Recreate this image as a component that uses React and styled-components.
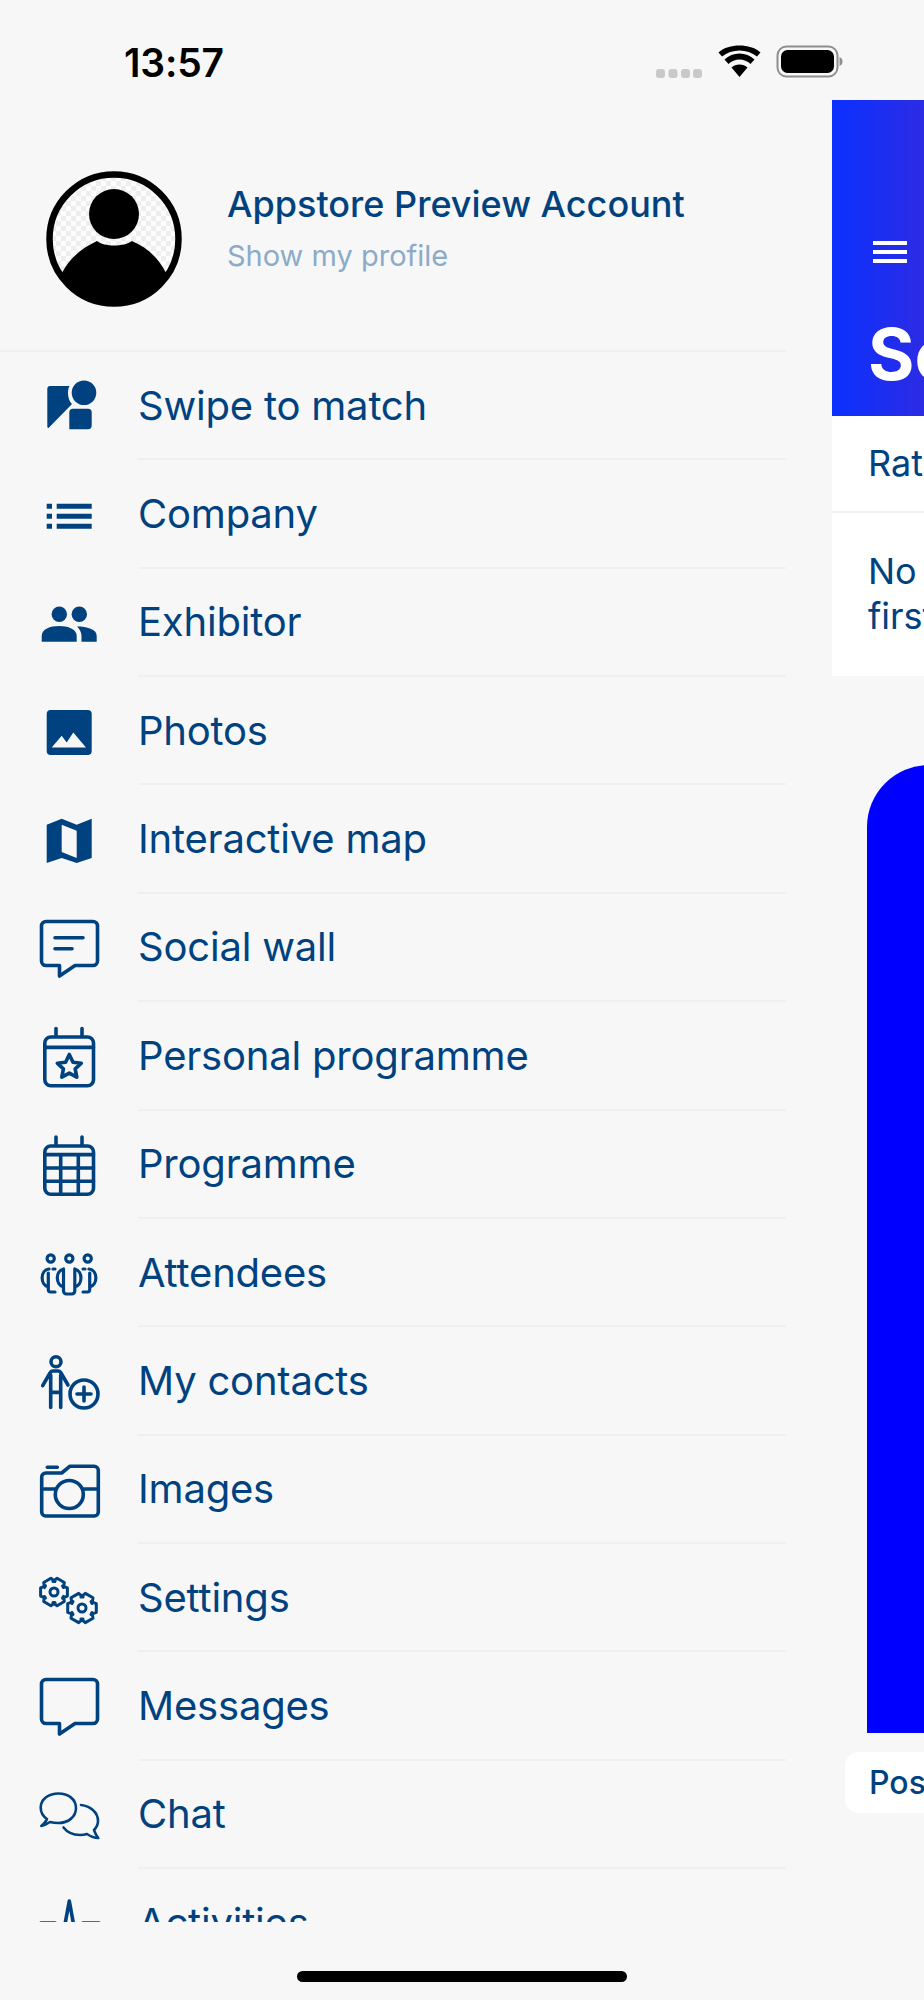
import React from "react"
import styled, { createGlobalStyle } from "styled-components"

const NAVY = "#00427f"

const GlobalStyle = createGlobalStyle`
  html, body {
    margin: 0;
    background: #f7f7f7;
  }
  body {
    font-family: Inter, "Noto Sans", sans-serif;
    -webkit-font-smoothing: antialiased;
  }
`

const Page = styled.div`
  width: 924px;
  height: 2000px;
  overflow: hidden;
  display: flex;
  flex-direction: column;
  background: #f7f7f7;
`

const StatusBar = styled.div`
  height: 100px;
  flex: none;
  display: flex;
  justify-content: space-between;
  padding: 0 81px 0 124px;
  box-sizing: border-box;
`

const Time = styled.div`
  font-size: 39px;
  font-weight: 600;
  line-height: 44px;
  margin-top: 41px;
  color: #000;
  letter-spacing: -0.2px;
`

const StatusIcons = styled.svg`
  width: 188px;
  height: 40px;
  margin-top: 42px;
`

const Main = styled.div`
  height: 1822px;
  flex: none;
  display: flex;
`

const Drawer = styled.nav`
  flex: none;
  width: 786px;
  margin-right: 46px;
  display: flex;
  flex-direction: column;
`

const Profile = styled.div`
  height: 252px;
  flex: none;
  box-sizing: border-box;
  border-bottom: 2px solid #f0f0f0;
  padding: 71px 0 0 46px;
  display: flex;
  align-items: flex-start;
  gap: 45px;
`

const Avatar = styled.svg`
  width: 136px;
  height: 136px;
  flex: none;
`

const ProfileText = styled.div`
  display: flex;
  flex-direction: column;
  padding-top: 11px;
`

const Name = styled.div`
  font-size: 36px;
  font-weight: 500;
  line-height: 44px;
  color: ${NAVY};
`

const ShowProfile = styled.div`
  font-size: 29px;
  line-height: 36px;
  margin-top: 12px;
  color: #8cabc9;
`

const Menu = styled.div`
  flex: 1;
  min-height: 0;
  overflow: hidden;
`

const Row = styled.div`
  height: 108.36px;
  display: flex;
  align-items: stretch;
`

const IconCell = styled.div`
  width: 138px;
  flex: none;
  display: flex;
  align-items: center;
  padding-left: 40px;
  box-sizing: border-box;
`

const Label = styled.div`
  flex: 1;
  display: flex;
  align-items: center;
  box-sizing: border-box;
  border-bottom: 2px solid #f0f0f0;
  font-size: 40px;
  letter-spacing: -0.2px;
  color: ${NAVY};
`

const Glyph = styled.svg`
  width: 60px;
  height: 60px;
  overflow: visible;
  fill: ${props => (props.$line ? "none" : NAVY)};
  stroke: ${props => (props.$line ? NAVY : "none")};
  stroke-width: ${props => props.$weight || 3.6}px;
  stroke-linecap: round;
  stroke-linejoin: round;
`

const Panel = styled.section`
  flex: none;
  width: 780px;
  display: flex;
  flex-direction: column;
`

const PanelHeader = styled.header`
  height: 316px;
  flex: none;
  box-sizing: border-box;
  padding: 141px 0 0 36px;
  background: linear-gradient(90deg, #0a30ff 0, #2c2ce4 92px, #3a2ad0 100%);
  color: #fff;
`

const Burger = styled.div`
  width: 34px;
  height: 22px;
  margin-left: 5px;
  display: flex;
  flex-direction: column;
  justify-content: space-between;
  span {
    height: 4px;
    background: #fff;
  }
`

const Title = styled.div`
  font-size: 71px;
  font-weight: 700;
  line-height: 84px;
  margin-top: 49px;
`

const Card = styled.div`
  background: #fff;
  height: 260px;
  flex: none;
  color: ${NAVY};
  font-size: 36px;
  line-height: 45px;
`

const CardRow = styled.div`
  height: 97px;
  box-sizing: border-box;
  padding: 25px 0 0 36px;
  border-bottom: 2px solid #f0f0f0;
`

const CardText = styled.div`
  padding: 36px 0 0 36px;
`

const PostImage = styled.div`
  height: 968px;
  flex: none;
  margin: 89px 0 0 35px;
  background: #0000ff;
  border-top-left-radius: 62px;
`

const PostButton = styled.div`
  margin: 19px 0 0 13px;
  height: 61px;
  flex: none;
  box-sizing: border-box;
  padding-left: 24px;
  display: flex;
  align-items: center;
  background: #fff;
  border-radius: 14px;
  color: ${NAVY};
  font-size: 32px;
  font-weight: 500;
`

const Footer = styled.div`
  flex: 1;
  display: flex;
  justify-content: center;
  padding-top: 49px;
  box-sizing: border-box;
`

const HomeBar = styled.div`
  width: 330px;
  height: 11px;
  background: #000;
  border-radius: 6px;
`

// six toothed cog outline, built once for the settings icon
const gearPath = (cx, cy, outer, inner) => {
  const points = []
  for (let i = 0; i < 6; i++) {
    const a = (i * Math.PI) / 3
    const steps = [
      [a - 0.3, outer],
      [a + 0.3, outer],
      [a + 0.62, inner],
      [a + Math.PI / 3 - 0.62, inner],
    ]
    steps.forEach(([ang, r]) => {
      points.push(`${(cx + r * Math.cos(ang)).toFixed(1)} ${(cy + r * Math.sin(ang)).toFixed(1)}`)
    })
  }
  return `M${points.join(" L")}Z`
}

const BUBBLE =
  "M6 3.5H53a4.5 4.5 0 0 1 4.5 4.5V43a4.5 4.5 0 0 1-4.5 4.5H35L19.5 58V47.5H6A4.5 4.5 0 0 1 1.5 43V8A4.5 4.5 0 0 1 6 3.5Z"

const icons = {
  swipe: (
    <Glyph viewBox="0 0 60 60">
      <path d="M10 10H29.5C27 14 27.5 24 32 28L9 51.5Q7.3 53 7.3 50V13Q7.3 10 10 10Z" />
      <circle cx="44" cy="16.7" r="12.3" />
      <path d="M33 32.7H48a3.7 3.7 0 0 1 3.7 3.7V49.6a3.7 3.7 0 0 1-3.7 3.7H29.3V36.4a3.7 3.7 0 0 1 3.7-3.7Z" />
    </Glyph>
  ),
  list: (
    <Glyph viewBox="0 0 60 60">
      <path d="M6.7 18.8H12V23.8H6.7ZM16.7 18.8H51.7V23.8H16.7ZM6.7 28.8H12V33.8H6.7ZM16.7 28.8H51.7V33.8H16.7ZM6.7 38.8H12V43.8H6.7ZM16.7 38.8H51.7V43.8H16.7Z" />
    </Glyph>
  ),
  people: (
    <Glyph viewBox="0 0 60 60">
      <circle cx="19.3" cy="21.3" r="7.7" />
      <circle cx="39.3" cy="21.3" r="7.7" />
      <path d="M1.7 48.7V43C1.7 36 10 33 19 33C28 33 36.7 36 36.7 43V48.7Z" />
      <path d="M37 33.5C47 33.5 56.7 36 56.7 43V48.7H41.5V43C41.5 39 39.5 36 37 33.5Z" />
    </Glyph>
  ),
  photo: (
    <Glyph viewBox="0 0 60 60">
      <path
        fillRule="evenodd"
        d="M10.7 9H47.7a4 4 0 0 1 4 4V50a4 4 0 0 1-4 4H10.7a4 4 0 0 1-4-4V13a4 4 0 0 1 4-4ZM11.7 46.5H46L33.3 31.5L26.7 41.5L21.7 34.8Z"
      />
    </Glyph>
  ),
  map: (
    <Glyph viewBox="0 0 60 60">
      <path
        fillRule="evenodd"
        d="M6.7 14.7L21.7 8.7L36.7 14.7L51.7 8.7V48.1L36.7 53.1L21.7 48.1L6.7 53.1ZM21.7 14.7V42.1L36.7 48.1V20.7Z"
      />
    </Glyph>
  ),
  wall: (
    <Glyph viewBox="0 0 60 60" $line>
      <path d={BUBBLE} />
      <path d="M15 19.7H43M15 30.7H32" />
    </Glyph>
  ),
  personal: (
    <Glyph viewBox="0 0 60 60" $line>
      <rect x="4.8" y="11" width="48.7" height="48.7" rx="6" />
      <path d="M4.8 21.4H53.5M16 2.5V10M42 2.5V10" />
      <path d="M29.3 28.5L33 36.2L41.3 37.2L35.2 42.9L36.8 51.2L29.3 47.1L21.8 51.2L23.4 42.9L17.3 37.2L25.6 36.2Z" />
    </Glyph>
  ),
  programme: (
    <Glyph viewBox="0 0 60 60" $line>
      <rect x="4.8" y="11" width="48.7" height="48.2" rx="6" />
      <path d="M4.8 19.6H53.5M16 2V10M42 2V10M20.7 19.6V59M38.3 19.6V59M4.8 33H53.5M4.8 46.3H53.5" />
    </Glyph>
  ),
  attendees: (
    <Glyph viewBox="0 0 60 60" $line $weight={3.2}>
      <circle cx="10.7" cy="15.5" r="3.6" />
      <circle cx="29.3" cy="15.5" r="3.6" />
      <circle cx="47.7" cy="15.5" r="3.6" />
      <path d="M23.5 26V48a3 3 0 0 0 3 3H31.8a3 3 0 0 0 3-3V26M23.5 26C15 28 15.5 42 23.5 44M34.8 26C43 28 43 42 34.8 44" />
      <path d="M9 26C0 27 0 42 8.3 44M8.3 30V46.5Q8.3 49 10.5 49H15M13 26H15" />
      <path d="M49 26C58 27 58 42 49.7 44M49.7 30V46.5Q49.7 49 47.5 49H43M45 26H43" />
    </Glyph>
  ),
  contacts: (
    <Glyph viewBox="0 0 60 60" $line>
      <circle cx="16" cy="10.7" r="5" />
      <path d="M2.7 34.7L10 22Q11 20 13 20H18Q20 20 21 22L28 34M10.7 24V56.4M20.7 24V56.4M10.7 41.4H20.7" />
      <circle cx="44" cy="43" r="14" />
      <path d="M37 43H51M44 36V50" />
    </Glyph>
  ),
  images: (
    <Glyph viewBox="0 0 60 60" $line>
      <path d="M1.7 17a4 4 0 0 1 4-4H21.7L30 6.2H54a4.3 4.3 0 0 1 4.3 4.3V52a4 4 0 0 1-4 4H5.7a4 4 0 0 1-4-4Z" />
      <path d="M7.3 7.2H17.3M1.7 29H16M43.5 29H58.3" />
      <circle cx="29.3" cy="34.5" r="14" />
    </Glyph>
  ),
  settings: (
    <Glyph viewBox="0 0 60 60" $line $weight={3}>
      <path d={gearPath(14, 24, 14, 10.5)} />
      <circle cx="14" cy="24" r="4" />
      <path d={gearPath(42, 40, 15, 11)} />
      <circle cx="42" cy="40" r="4" />
    </Glyph>
  ),
  messages: (
    <Glyph viewBox="0 0 60 60" $line>
      <path d={BUBBLE} />
    </Glyph>
  ),
  chat: (
    <Glyph viewBox="0 0 60 60" $line $weight={2.6}>
      <path d="M7 34C1 30 .7 25 .7 22.5C.7 14 9 8.5 18.5 8.5C28 8.5 36 14 36 23C36 32 28 38 18.5 38C15 38 12 37.5 10 37C7 39 4 40.5 1.3 41C3.5 39 6 36.5 7 34Z" />
      <path d="M41 20C50 21 58 27 58 36C58 40 56 43 54 45C55 48 56.5 51 58.3 53C54 53 50 51 47 49C44 50 42 50 40 50C32 50 27 47 23.5 42.5" />
    </Glyph>
  ),
  activities: (
    <Glyph viewBox="0 0 60 60" $line>
      <path d="M1 30H15M23 42L29.3 8L35.5 42M43 30H59" />
    </Glyph>
  ),
}

const menuItems = [
  ["swipe", "Swipe to match"],
  ["list", "Company"],
  ["people", "Exhibitor"],
  ["photo", "Photos"],
  ["map", "Interactive map"],
  ["wall", "Social wall"],
  ["personal", "Personal programme"],
  ["programme", "Programme"],
  ["attendees", "Attendees"],
  ["contacts", "My contacts"],
  ["images", "Images"],
  ["settings", "Settings"],
  ["messages", "Messages"],
  ["chat", "Chat"],
  ["activities", "Activities"],
]

const App = () => {
  return (
    <Page>
      <GlobalStyle />
      <StatusBar>
        <Time>13:57</Time>
        <StatusIcons viewBox="0 0 188 40">
          <g fill="#c9c9c9">
            <rect x="1" y="27" width="9" height="9" rx="3" />
            <rect x="13.5" y="27" width="9" height="9" rx="3" />
            <rect x="26" y="27" width="9" height="9" rx="3" />
            <rect x="38" y="27" width="9" height="9" rx="3" />
          </g>
          <path d="M84.5 35L76.5 25.5C78.5 23.5 81.5 22.5 84.5 22.5C87.5 22.5 90.5 23.5 92.5 25.5ZM73.5 22L69.5 17.5C73.5 13.5 79 11.5 84.5 11.5C90 11.5 95.5 13.5 99.5 17.5L95.5 22C92.5 19 88.5 17.5 84.5 17.5C80.5 17.5 76.5 19 73.5 22ZM67 14.5L63.5 10.5C69 5.5 76.5 3.5 84.5 3.5C92.5 3.5 100 5.5 105.5 10.5L102 14.5C97 10.5 91 8.5 84.5 8.5C78 8.5 72 10.5 67 14.5Z" />
          <rect x="122.5" y="4.5" width="60" height="30" rx="9" fill="none" stroke="#8e8e8e" strokeWidth="2" />
          <rect x="126" y="8" width="53" height="23" rx="6.5" fill="#000" />
          <path d="M184.5 15v9c2-.8 3-2.5 3-4.5s-1-3.7-3-4.5Z" fill="#8e8e8e" />
        </StatusIcons>
      </StatusBar>
      <Main>
        <Drawer>
          <Profile>
            <Avatar viewBox="0 0 136 136">
              <defs>
                <clipPath id="avatar-clip">
                  <circle cx="68" cy="68" r="64" />
                </clipPath>
                <pattern id="avatar-checks" width="10" height="10" patternUnits="userSpaceOnUse">
                  <rect width="10" height="10" fill="#fdfdfd" />
                  <rect width="5" height="5" fill="#eeeeee" />
                  <rect x="5" y="5" width="5" height="5" fill="#eeeeee" />
                </pattern>
              </defs>
              <circle cx="68" cy="68" r="64" fill="url(#avatar-checks)" />
              <circle cx="68" cy="43" r="25" />
              <path
                clipPath="url(#avatar-clip)"
                d="M51 70C58 76 78 76 86 70C100 76 112 86 120 102L120 140H16V102C24 86 38 76 51 70Z"
              />
              <circle cx="68" cy="68" r="64.5" fill="none" stroke="#000" strokeWidth="6.5" />
            </Avatar>
            <ProfileText>
              <Name>Appstore Preview Account</Name>
              <ShowProfile>Show my profile</ShowProfile>
            </ProfileText>
          </Profile>
          <Menu>
            {menuItems.map(([icon, label]) => (
              <Row key={label}>
                <IconCell>{icons[icon]}</IconCell>
                <Label>{label}</Label>
              </Row>
            ))}
          </Menu>
        </Drawer>
        <Panel>
          <PanelHeader>
            <Burger>
              <span />
              <span />
              <span />
            </Burger>
            <Title>Social wall</Title>
          </PanelHeader>
          <Card>
            <CardRow>Rate this event</CardRow>
            <CardText>
              No messages yet, be the
              <br />
              first to post something
            </CardText>
          </Card>
          <PostImage />
          <PostButton>Post a message</PostButton>
        </Panel>
      </Main>
      <Footer>
        <HomeBar />
      </Footer>
    </Page>
  )
}

export default App
